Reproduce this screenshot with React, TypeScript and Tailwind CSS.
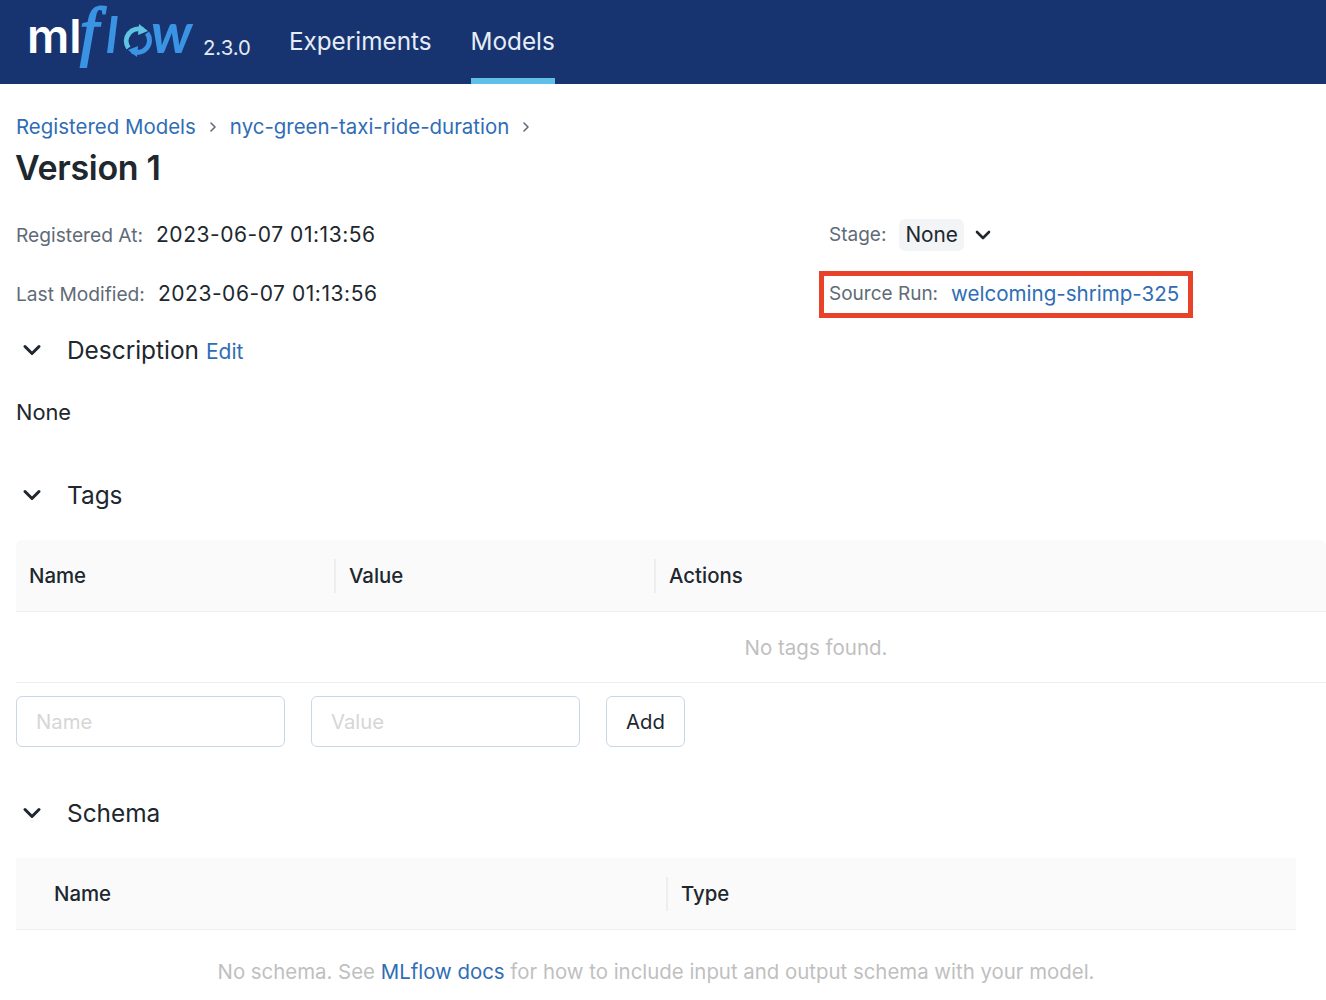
import { ChevronDown, ChevronRight } from 'lucide-react'

const BLUE = 'text-[#2f6db5]'

function SectionHead({ title, children }: { title: string; children?: React.ReactNode }) {
  return (
    <div className="flex items-center h-8">
      <ChevronDown size={28} strokeWidth={2.6} className="ml-[2px] text-[#20272e]" />
      <span className="ml-[21px] text-[24.4px] leading-8 text-[#20272e]">{title}</span>
      {children}
    </div>
  )
}

// mlflow wordmark: real text, the "o" is the two refresh arrows
function Logo() {
  return (
    <svg width="170" height="84" viewBox="0 0 170 84" className="shrink-0 ml-[27px] select-none overflow-visible">
      <text x="0" y="53" fontFamily="Inter" fontWeight="600" fontSize="47" fill="#ffffff">ml</text>
      <text x="53" y="53" fontFamily="Liberation Serif" fontStyle="italic" fontSize="66" fill="#3b93e3" stroke="#3b93e3" strokeWidth="2">f</text>
      <text x="79" y="53" fontFamily="Lato" fontStyle="italic" fontWeight="700" fontSize="50" fill="#3b93e3">l</text>
      <path d="M101.5 48A12 12 0 0 1 116 30" fill="none" stroke="#5fc3e4" strokeWidth="5" />
      <path d="M112 24l9 7-10 4z" fill="#5fc3e4" />
      <path d="M120 33A12 12 0 0 1 105 51" fill="none" stroke="#3b93e3" strokeWidth="5" />
      <path d="M110 57l-9-7 10-4z" fill="#3b93e3" />
      <text x="124" y="53" fontFamily="Lato" fontStyle="italic" fontWeight="700" fontSize="56" fill="#3b93e3">w</text>
    </svg>
  )
}

export default function App() {
  return (
    <div className="font-['Inter',sans-serif] text-[#20272e] bg-white h-[1000px] overflow-hidden">
      {/* Header */}
      <div className="flex bg-[#173470] h-[84px]">
        <Logo />
        <div className="ml-[6px] pt-[36px] text-[20.3px] leading-6 text-[#e4ebf5]">2.3.0</div>
        <div className="flex ml-[38px] gap-[39px] text-[24.3px] text-[#e6edf7]">
          <div className="h-[84px] pt-[25px] leading-8">Experiments</div>
          <div className="h-[84px] pt-[25px] leading-8 border-b-[6px] border-[#5fbfe8]">Models</div>
        </div>
      </div>

      <div className="pl-4">
        {/* Breadcrumb */}
        <div className={`flex items-center mt-[29px] h-7 text-[20.45px] ${BLUE}`}>
          <span>Registered Models</span>
          <ChevronRight size={16} strokeWidth={2.4} className="mx-[9px] text-[#5f6b78]" />
          <span>nyc-green-taxi-ride-duration</span>
          <ChevronRight size={16} strokeWidth={2.4} className="mx-[9px] text-[#5f6b78]" />
        </div>
        <h1 className="mt-[6px] -ml-[1px] text-[34px] leading-[42px] font-semibold tracking-[-0.3px]">Version 1</h1>

        {/* Metadata */}
        <div className="grid grid-cols-[813px_1fr] mt-[25px]">
          <div className="flex items-center h-[42px]">
            <span className="text-[19.2px] text-[#5f6b78]">Registered At:</span>
            <span className="ml-[13px] text-[21px] tracking-[0.55px]">2023-06-07 01:13:56</span>
          </div>
          <div className="flex items-center h-[42px]">
            <span className="text-[19px] text-[#5f6b78]">Stage:</span>
            <span className="ml-[13px] px-[6px] h-8 leading-8 rounded-md bg-[#f2f4f5] text-[20.8px]">None</span>
            <ChevronDown size={24} strokeWidth={2.6} className="ml-[7px]" />
          </div>
          <div className="flex items-center h-[42px] mt-[17px]">
            <span className="text-[19.2px] text-[#5f6b78]">Last Modified:</span>
            <span className="ml-[13px] text-[21px] tracking-[0.55px]">2023-06-07 01:13:56</span>
          </div>
          <div className="mt-[15px] -ml-[10px] w-[374px] h-[47px] border-[5px] border-[#e8432a] flex items-center pl-[5px] whitespace-nowrap">
            <span className="text-[19px] text-[#5f6b78]">Source Run:</span>
            <span className={`ml-[13px] -mt-[1px] text-[20.55px] ${BLUE}`}>welcoming-shrimp-325</span>
          </div>
        </div>

        {/* Description */}
        <div className="mt-[16px]">
          <SectionHead title="Description">
            <span className={`ml-[7px] mt-[3px] text-[21px] ${BLUE}`}>Edit</span>
          </SectionHead>
        </div>
        <div className="mt-[32px] text-[21.8px] leading-7">None</div>

        {/* Tags */}
        <div className="mt-[53px]">
          <SectionHead title="Tags" />
        </div>
        <div className="mt-[29px] flex items-center h-[72px] bg-[#fafafa] border-b border-[#eeeeee] rounded-t-md text-[20.4px] font-medium">
          <div className="w-[320px] pl-[13px] border-r-2 border-[#eeeeee] h-[34px] leading-[34px]">Name</div>
          <div className="w-[320px] pl-[13px] border-r-2 border-[#eeeeee] h-[34px] leading-[34px]">Value</div>
          <div className="pl-[13px] h-[34px] leading-[34px]">Actions</div>
        </div>
        <div className="h-[71px] flex items-center justify-center border-b border-[#eeeeee] text-[20.5px] text-[#bfbfbf] pl-[290px] pt-[3px]">
          No tags found.
        </div>

        <div className="flex mt-[13px] gap-[26px] text-[20.3px]">
          <div className="w-[269px] h-[51px] border border-[#c9d8e8] rounded-md pl-[19px] leading-[49px] text-[#d6d6d6]">Name</div>
          <div className="w-[269px] h-[51px] border border-[#c9d8e8] rounded-md pl-[19px] leading-[49px] text-[#d6d6d6]">Value</div>
          <div className="w-[79px] h-[51px] border border-[#c9d8e8] rounded-md text-center leading-[49px]">Add</div>
        </div>

        {/* Schema */}
        <div className="mt-[50px]">
          <SectionHead title="Schema" />
        </div>
        <div className="mt-[29px] mr-[30px] flex items-center h-[72px] bg-[#fafafa] border-b border-[#eeeeee] text-[20.4px] font-medium">
          <div className="w-[652px] pl-[38px] border-r-2 border-[#eeeeee] h-[34px] leading-[34px]">Name</div>
          <div className="pl-[13px] h-[34px] leading-[34px]">Type</div>
        </div>
        <div className="mr-[30px] mt-[27px] text-center text-[20.4px] text-[#bfbfbf] whitespace-nowrap">
          No schema. See <span className={BLUE}>MLflow docs</span> for how to include input and output schema with your model.
        </div>
      </div>
    </div>
  )
}
